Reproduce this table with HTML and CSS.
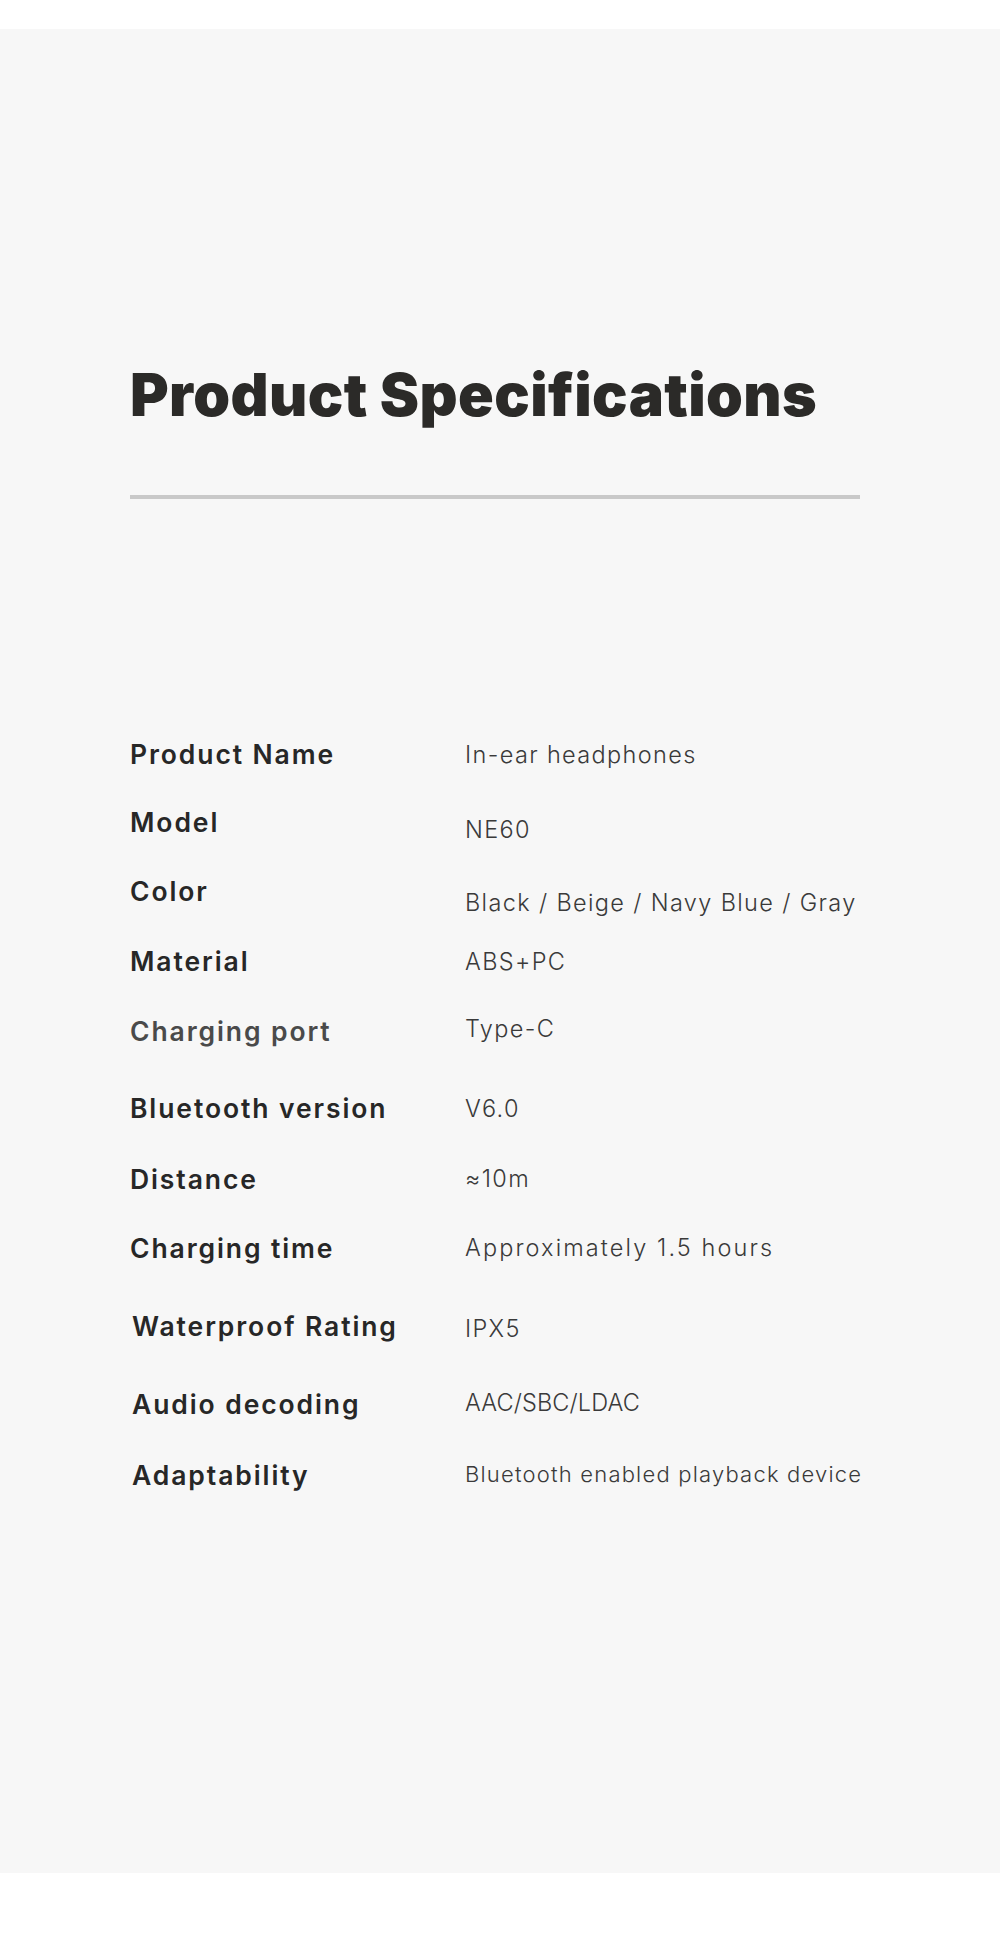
FILE: index.html
```html
<!DOCTYPE html>
<html lang="en">
<head>
<meta charset="utf-8">
<title>Product Specifications</title>
<link rel="stylesheet" href="styles.css">
</head>
<body>
<section class="specs">
  <h1 class="specs-title">Product Specifications</h1>
  <div class="specs-rule"></div>
  <div class="spec-list">
    <div class="spec-row r1"><div class="spec-label">Product Name</div><div class="spec-value">In-ear headphones</div></div>
    <div class="spec-row r2"><div class="spec-label">Model</div><div class="spec-value">NE60</div></div>
    <div class="spec-row r3"><div class="spec-label">Color</div><div class="spec-value">Black / Beige / Navy Blue / Gray</div></div>
    <div class="spec-row r4"><div class="spec-label">Material</div><div class="spec-value">ABS+PC</div></div>
    <div class="spec-row r5"><div class="spec-label muted">Charging port</div><div class="spec-value">Type-C</div></div>
    <div class="spec-row r6"><div class="spec-label">Bluetooth version</div><div class="spec-value">V6.0</div></div>
    <div class="spec-row r7"><div class="spec-label">Distance</div><div class="spec-value">≈10m</div></div>
    <div class="spec-row r8"><div class="spec-label">Charging time</div><div class="spec-value wide">Approximately 1.5 hours</div></div>
    <div class="spec-row r9"><div class="spec-label inset">Waterproof Rating</div><div class="spec-value">IPX5</div></div>
    <div class="spec-row r10"><div class="spec-label inset">Audio decoding</div><div class="spec-value tight">AAC/SBC/LDAC</div></div>
    <div class="spec-row r11"><div class="spec-label inset">Adaptability</div><div class="spec-value small">Bluetooth enabled playback device</div></div>
  </div>
</section>
</body>
</html>
```

FILE: styles.css
```css
html, body {
  margin: 0;
  padding: 0;
  background: #ffffff;
}

body {
  font-family: "Inter", "Noto Sans", "Liberation Sans", sans-serif;
  color: #2a2a2a;
}

.specs {
  margin-top: 29px;
  height: 1844px;
  box-sizing: border-box;
  background: #f7f7f7;
  padding: 336px 0 0 130px;
}

.specs-title {
  margin: 0;
  font-size: 59px;
  line-height: 59px;
  font-weight: 900;
  letter-spacing: 0.4px;
  color: #2b2a28;
}

.specs-rule {
  margin-top: 71px;
  width: 730px;
  height: 4px;
  background: #c9c9c9;
}

.spec-list {
  margin-top: 239px;
  display: flex;
  flex-direction: column;
}

.spec-row {
  display: flex;
  align-items: flex-start;
  height: 32px;
}

.spec-label {
  width: 335px;
  flex: none;
  font-size: 26.5px;
  line-height: 32px;
  font-weight: 600;
  color: #272727;
  letter-spacing: 1.9px;
}

.spec-label.muted { color: #4a4a4a; }
.spec-label.inset { padding-left: 2px; width: 333px; }

.spec-value {
  font-size: 23.5px;
  line-height: 32px;
  font-weight: 300;
  color: #3a3a3a;
  margin-top: 1px;
  white-space: nowrap;
  letter-spacing: 1.35px;
}

.spec-value.wide { letter-spacing: 2.1px; }
.spec-value.tight { letter-spacing: 0.1px; }
.spec-value.small { font-size: 22px; letter-spacing: 1.2px; }

.r2 { margin-top: 36px; }
.r3 { margin-top: 37px; }
.r4 { margin-top: 38px; }
.r5 { margin-top: 38px; }
.r6 { margin-top: 45px; }
.r7 { margin-top: 39px; }
.r8 { margin-top: 37px; }
.r9 { margin-top: 46px; }
.r10 { margin-top: 46px; }
.r11 { margin-top: 39px; }

.r2 .spec-value { margin-top: 8px; }
.r3 .spec-value { margin-top: 12px; }
.r5 .spec-value { margin-top: -2px; }
.r7 .spec-value, .r8 .spec-value { margin-top: 0; }
.r9 .spec-value { margin-top: 3px; }
.r10 .spec-value, .r11 .spec-value { margin-top: -1px; }
```
